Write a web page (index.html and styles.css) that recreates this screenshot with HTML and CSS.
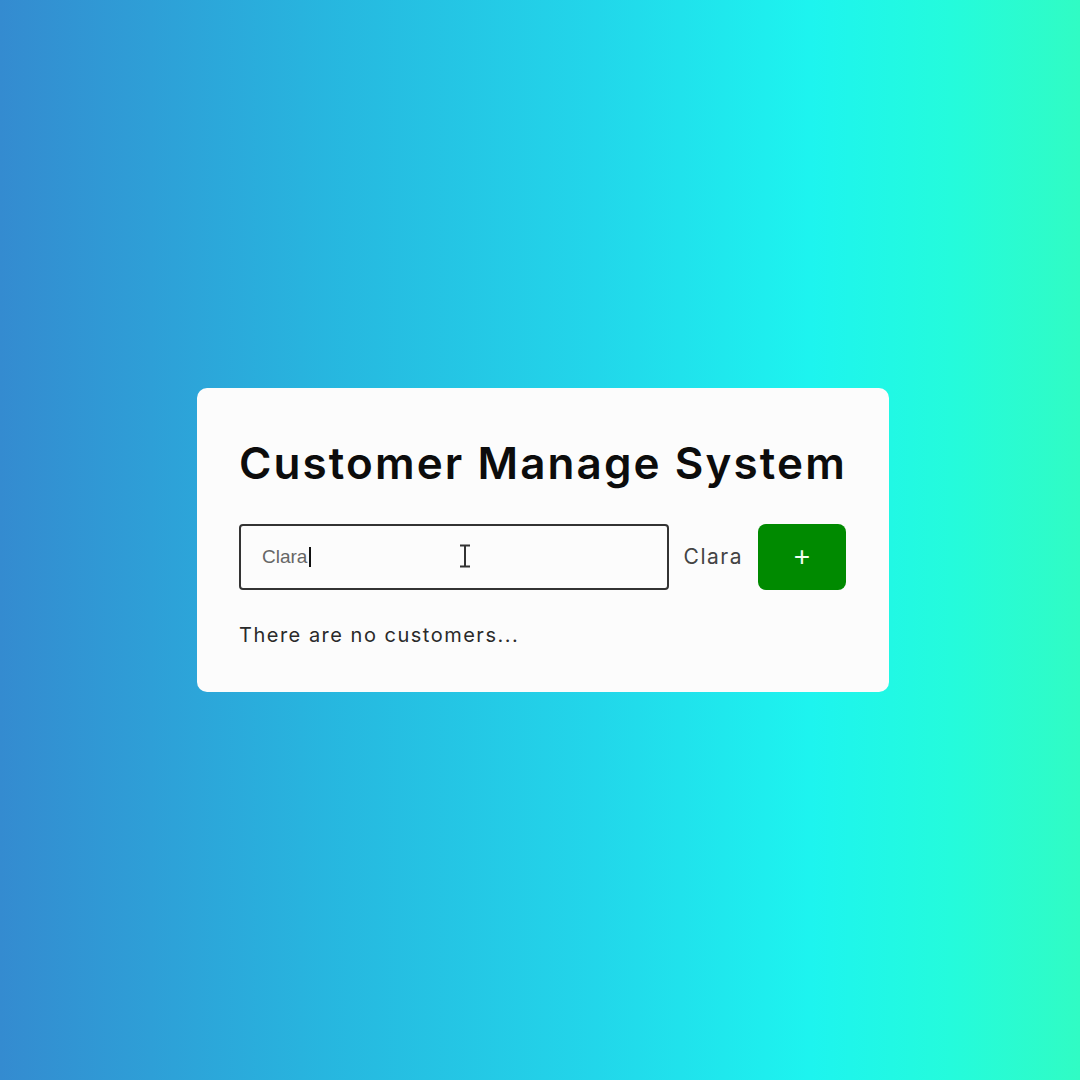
FILE: index.html
```html
<!DOCTYPE html>
<html lang="en">
<head>
<meta charset="utf-8">
<title>Customer Manage System</title>
<link rel="stylesheet" href="styles.css">
</head>
<body>
<main class="card">
  <h1 class="title">Customer Manage System</h1>
  <div class="form-row">
    <div class="input-wrap">
      <input class="name-input" type="text" value="Clara">
      <span class="caret"></span>
      <svg class="ibeam" width="12" height="24" viewBox="0 0 12 24" aria-hidden="true">
        <path d="M2 1.5h8M6 1.5v21M2 22.5h8" stroke="#333" stroke-width="2" fill="none" stroke-linecap="square"/>
      </svg>
    </div>
    <span class="preview">Clara</span>
    <button class="add-btn" type="button">+</button>
  </div>
  <p class="empty">There are no customers...</p>
</main>
</body>
</html>
```
FILE: styles.css
```css
* { box-sizing: border-box; }
html, body { margin: 0; height: 100%; }
body {
  min-height: 100vh;
  display: flex;
  align-items: center;
  justify-content: center;
  background: linear-gradient(90deg, #348bd0 0%, #27b6df 30%, #22d6ea 55%, #1df4ef 75%, #24fbdc 88%, #30fcc4 100%);
  font-family: Inter, "Noto Sans", sans-serif;
}
.card {
  width: 692px;
  background: #fcfcfc;
  border-radius: 10px;
  padding: 44px 43px 44px 42px;
  margin-left: 6px;
  margin-top: -1px;
}
.title {
  margin: 0 0 30px;
  font-size: 44px;
  font-weight: 600;
  color: #0c0c0c;
  line-height: 62px;
  letter-spacing: 2.1px;
  white-space: nowrap;
}
.form-row {
  display: flex;
  align-items: center;
  gap: 15px;
}
.input-wrap {
  position: relative;
  flex: 1;
}
.name-input {
  display: block;
  width: 100%;
  height: 66px;
  border: 2px solid #333;
  border-radius: 4px;
  padding: 0 21px;
  font-family: "Liberation Sans", Arial, sans-serif;
  font-size: 19px;
  color: #666;
  background: #fcfcfc;
  outline: none;
}
.caret {
  position: absolute;
  left: 70px;
  top: 23px;
  width: 2px;
  height: 20px;
  background: #111;
}
.ibeam {
  position: absolute;
  left: 220px;
  top: 20px;
}
.preview {
  font-size: 21px;
  letter-spacing: 1.5px;
  color: #444;
}
.add-btn {
  flex: none;
  width: 88px;
  height: 66px;
  border: none;
  border-radius: 8px;
  background: #008a00;
  color: #f4fff4;
  font-family: "Liberation Sans", Arial, sans-serif;
  font-size: 28px;
  font-weight: 300;
  line-height: 1;
}
.empty {
  margin: 32px 0 0;
  font-size: 20px;
  letter-spacing: 1.5px;
  color: #2a2a2a;
  line-height: 26px;
}
```
